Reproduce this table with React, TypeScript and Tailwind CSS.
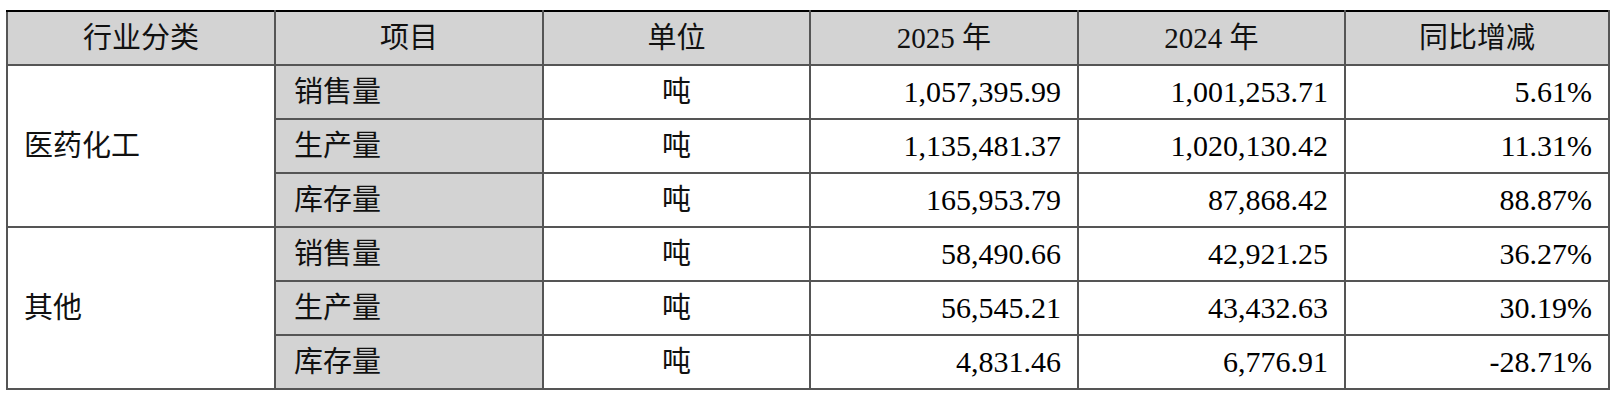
import React from "react";

interface Row {
	item: string;
	unit: string;
	y2025: string;
	y2024: string;
	change: string;
}

interface Group {
	name: string;
	rows: Row[];
}

const groups: Group[] = [
	{
		name: "医药化工",
		rows: [
			{ item: "销售量", unit: "吨", y2025: "1,057,395.99", y2024: "1,001,253.71", change: "5.61%" },
			{ item: "生产量", unit: "吨", y2025: "1,135,481.37", y2024: "1,020,130.42", change: "11.31%" },
			{ item: "库存量", unit: "吨", y2025: "165,953.79", y2024: "87,868.42", change: "88.87%" },
		],
	},
	{
		name: "其他",
		rows: [
			{ item: "销售量", unit: "吨", y2025: "58,490.66", y2024: "42,921.25", change: "36.27%" },
			{ item: "生产量", unit: "吨", y2025: "56,545.21", y2024: "43,432.63", change: "30.19%" },
			{ item: "库存量", unit: "吨", y2025: "4,831.46", y2024: "6,776.91", change: "-28.71%" },
		],
	},
];

const headers = ["行业分类", "项目", "单位", "2025 年", "2024 年", "同比增减"];

const cell = "border-2 border-[#555] h-[54px] px-4 py-0";
const num = `${cell} text-right text-[30px] text-black`;

export default function App() {
	return (
		<div className="bg-white w-[1618px] h-[402px] pt-[10px] pl-[6px] text-[29px] leading-none text-[#111] font-['Liberation_Serif','Noto_Sans_CJK_SC',serif]">
			<table className="border-collapse table-fixed w-[1602px] border-t-2 border-b-2 border-black">
				<colgroup>
					<col className="w-[268px]" />
					<col className="w-[268px]" />
					<col className="w-[267px]" />
					<col className="w-[268px]" />
					<col className="w-[267px]" />
					<col className="w-[264px]" />
				</colgroup>
				<thead>
					<tr className="bg-[#d3d3d3]">
						{headers.map((h) => (
							<th key={h} className={`${cell} border-t-black font-normal text-center`}>
								{h}
							</th>
						))}
					</tr>
				</thead>
				<tbody>
					{groups.map((g) =>
						g.rows.map((r, i) => (
							<tr key={g.name + r.item}>
								{i === 0 && (
									<td rowSpan={g.rows.length} className={`${cell} text-left`}>
										{g.name}
									</td>
								)}
								<td className={`${cell} bg-[#d3d3d3] text-left pl-[18px]`}>{r.item}</td>
								<td className={`${cell} text-center`}>{r.unit}</td>
								<td className={num}>{r.y2025}</td>
								<td className={num}>{r.y2024}</td>
								<td className={num}>{r.change}</td>
							</tr>
						)),
					)}
				</tbody>
			</table>
		</div>
	);
}
